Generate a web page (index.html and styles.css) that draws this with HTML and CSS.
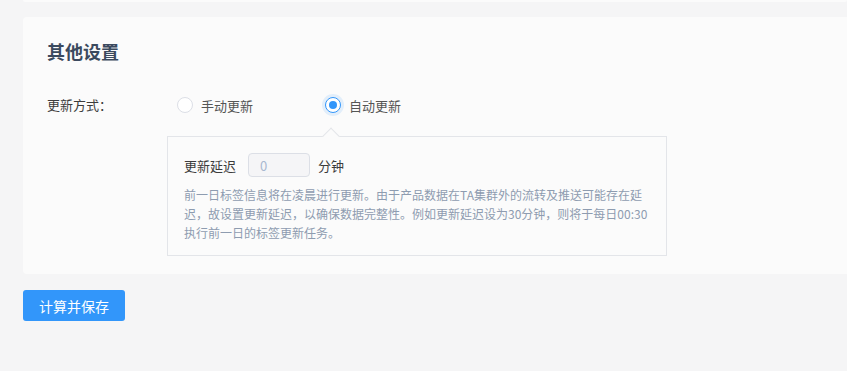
FILE: index.html
```html
<!DOCTYPE html>
<html lang="zh-CN">
<head>
    <meta charset="UTF-8">
    <title>其他设置</title>
    <link rel="stylesheet" href="styles.css">
</head>
<body>
    <div class="top-card"></div>

    <div class="panel">
        <h3 class="panel__title">其他设置</h3>

        <div class="form-row">
            <div class="form-row__label">更新方式：</div>
            <div class="form-row__content">
                <div class="radio-group">
                    <label class="radio">
                        <span class="radio__circle"></span>
                        <span class="radio__text">手动更新</span>
                    </label>
                    <label class="radio radio--checked">
                        <span class="radio__circle"></span>
                        <span class="radio__text">自动更新</span>
                    </label>
                </div>

                <div class="popover">
                    <span class="popover__arrow"></span>
                    <div class="delay">
                        <span class="delay__label">更新延迟</span>
                        <input type="text" class="delay__input" value="0" disabled>
                        <span class="delay__unit">分钟</span>
                    </div>
                    <p class="popover__desc">前一日标签信息将在凌晨进行更新。由于产品数据在TA集群外的流转及推送可能存在延迟，故设置更新延迟，以确保数据完整性。例如更新延迟设为30分钟，则将于每日00:30执行前一日的标签更新任务。</p>
                </div>
            </div>
        </div>
    </div>

    <div class="footer">
        <button class="save-btn">计算并保存</button>
    </div>
</body>
</html>
```

FILE: styles.css
```css
* {
    margin: 0;
    padding: 0;
    box-sizing: border-box;
    font-family: "Noto Sans CJK SC", "Liberation Sans", sans-serif;
}

body {
    background-color: #f5f5f6;
    color: #333;
}

.top-card {
    height: 2px;
    margin-left: 23px;
    background-color: #fbfbfb;
    border-radius: 0 0 4px 4px;
}

.panel {
    margin: 15px 0 0 23px;
    height: 257px;
    padding: 21px 24px 0;
    background-color: #fbfbfb;
    border-radius: 4px 0 0 4px;
}

.panel__title {
    font-size: 18px;
    line-height: 26px;
    font-weight: bold;
    color: #3b4a5e;
}

.form-row {
    display: flex;
    margin-top: 31px;
}

.form-row__label {
    width: 120px;
    font-size: 13px;
    line-height: 20px;
    color: #3c3c3c;
}

.radio-group {
    display: flex;
    padding-left: 10px;
    height: 20px;
    align-items: center;
}

.radio {
    display: flex;
    align-items: center;
    margin-right: 72px;
    cursor: pointer;
}

.radio__circle {
    width: 16px;
    height: 16px;
    border: 1px solid #dcdfe6;
    border-radius: 50%;
    background-color: #fff;
    position: relative;
}

.radio__text {
    margin-left: 8px;
    font-size: 13px;
    color: #555;
}

.radio--checked .radio__circle {
    border-color: #3296fa;
    box-shadow: 0 0 0 3px rgba(50, 150, 250, 0.12);
}

.radio--checked .radio__circle::after {
    content: "";
    position: absolute;
    left: 3px;
    top: 3px;
    width: 8px;
    height: 8px;
    border-radius: 50%;
    background-color: #3296fa;
}

.popover {
    position: relative;
    width: 500px;
    margin-top: 21px;
    padding: 16px 16px 13px;
    background-color: #fbfbfb;
    border: 1px solid #e3e5e9;
}

.popover__arrow {
    position: absolute;
    top: -7px;
    left: 157px;
    width: 12px;
    height: 12px;
    background-color: #fbfbfb;
    border-top: 1px solid #e3e5e9;
    border-left: 1px solid #e3e5e9;
    transform: rotate(45deg);
}

.delay {
    display: flex;
    align-items: center;
    height: 24px;
}

.delay__label,
.delay__unit {
    font-size: 13px;
    color: #3c3c3c;
}

.delay__input {
    width: 62px;
    height: 24px;
    margin: 0 8px 0 12px;
    padding: 0 11px;
    border: 1px solid #dcdfe6;
    border-radius: 4px;
    background-color: #f5f5f7;
    color: #a8b8d0;
    font-size: 13px;
}

.popover__desc {
    margin-top: 8px;
    font-size: 12px;
    line-height: 19px;
    color: #8e9cb0;
}

.footer {
    padding: 16px 0 0 23px;
}

.save-btn {
    width: 102px;
    height: 31px;
    background-color: #3296fa;
    color: white;
    border: none;
    border-radius: 3px;
    font-size: 14px;
    cursor: pointer;
}
```
